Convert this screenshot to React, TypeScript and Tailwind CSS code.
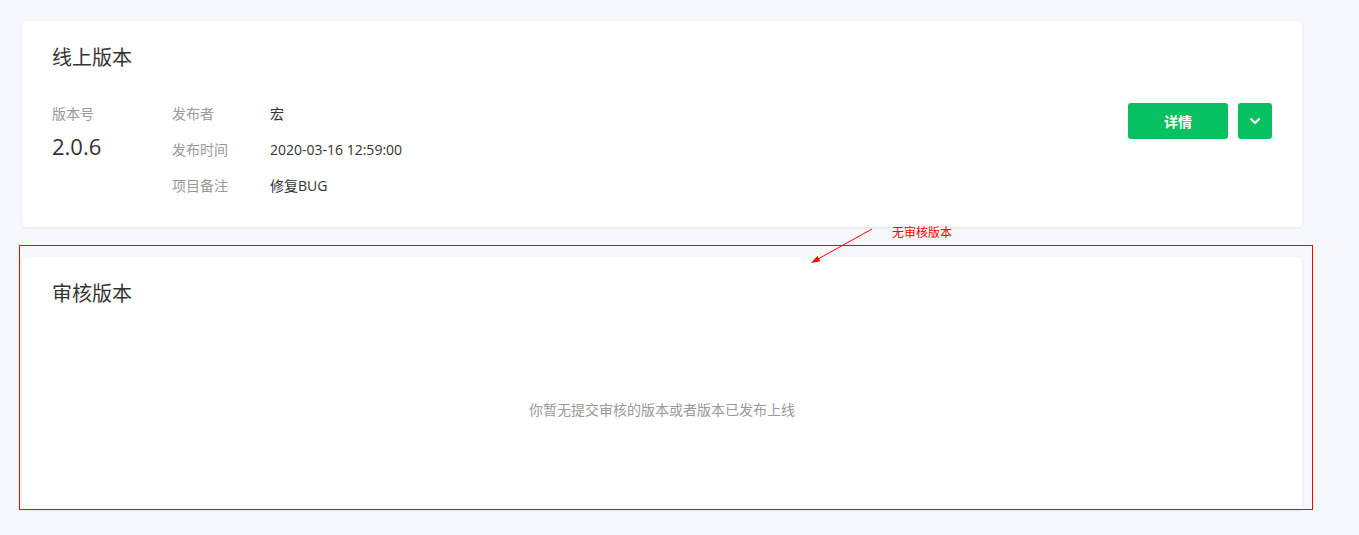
import { ChevronDown } from "lucide-react";

const rows = [
  { label: "发布者", value: "宏" },
  { label: "发布时间", value: "2020-03-16 12:59:00" },
  { label: "项目备注", value: "修复BUG" },
];

const font = { fontFamily: '"Open Sans", "Noto Sans CJK SC", sans-serif' };

const App = () => {
  return (
    <div className="min-h-[535px] w-full bg-[#f7f8fa] pt-[21px] pl-[22px] pr-[57px]" style={font}>
      {/* 线上版本 */}
      <section className="rounded-[4px] bg-white px-[30px] pt-[23px] pb-[30px] shadow-[0_1px_3px_rgba(0,0,0,0.08)]">
        <h2 className="text-[20px] leading-[28px] text-[#333]">线上版本</h2>
        <div className="mt-[31px] flex items-start">
          <div className="w-[120px]">
            <div className="text-[14px] leading-[22px] text-[#999]">版本号</div>
            <div className="mt-[9px] text-[22px] leading-[24px] text-[#333]">2.0.6</div>
          </div>
          <div className="flex flex-1 flex-col gap-[14px]">
            {rows.map((r) => (
              <div key={r.label} className="flex text-[14px] leading-[22px]">
                <span className="w-[98px] text-[#999]">{r.label}</span>
                <span className="text-[#333]">{r.value}</span>
              </div>
            ))}
          </div>
          <div className="flex gap-[10px]">
            <button className="h-[36px] w-[100px] rounded-[3px] bg-[#07c160] text-[14px] font-bold text-white">
              详情
            </button>
            <button className="flex h-[36px] w-[34px] items-center justify-center rounded-[3px] bg-[#07c160] text-white">
              <ChevronDown className="h-[16px] w-[16px]" strokeWidth={3} />
            </button>
          </div>
        </div>
      </section>

      {/* 审核版本 */}
      <div className="relative mt-[30px]">
        <section className="h-[253px] rounded-[4px] bg-white px-[30px] pt-[23px] shadow-[0_1px_3px_rgba(0,0,0,0.08)]">
          <h2 className="text-[20px] leading-[28px] text-[#333]">审核版本</h2>
          <p className="mt-[91px] text-center text-[14px] leading-[22px] text-[#999]">
            你暂无提交审核的版本或者版本已发布上线
          </p>
        </section>

        {/* annotation */}
        <div className="pointer-events-none absolute top-[-12px] right-[-11px] bottom-0 left-[-3px] border border-[#ff0000]" />
        <div className="pointer-events-none absolute top-[-31px] left-[870px] text-[12px] leading-[14px] text-[#ff0000]">
          无审核版本
        </div>
        <svg
          className="pointer-events-none absolute top-[-30px] left-[788px]"
          width="70"
          height="40"
          viewBox="0 0 70 40"
        >
          <line x1="62" y1="2" x2="8" y2="32" stroke="#ff0000" strokeWidth="1" />
          <polygon points="1,36 10.4,34.2 7.4,29" fill="#ff0000" />
        </svg>
      </div>
    </div>
  );
};

export default App;
